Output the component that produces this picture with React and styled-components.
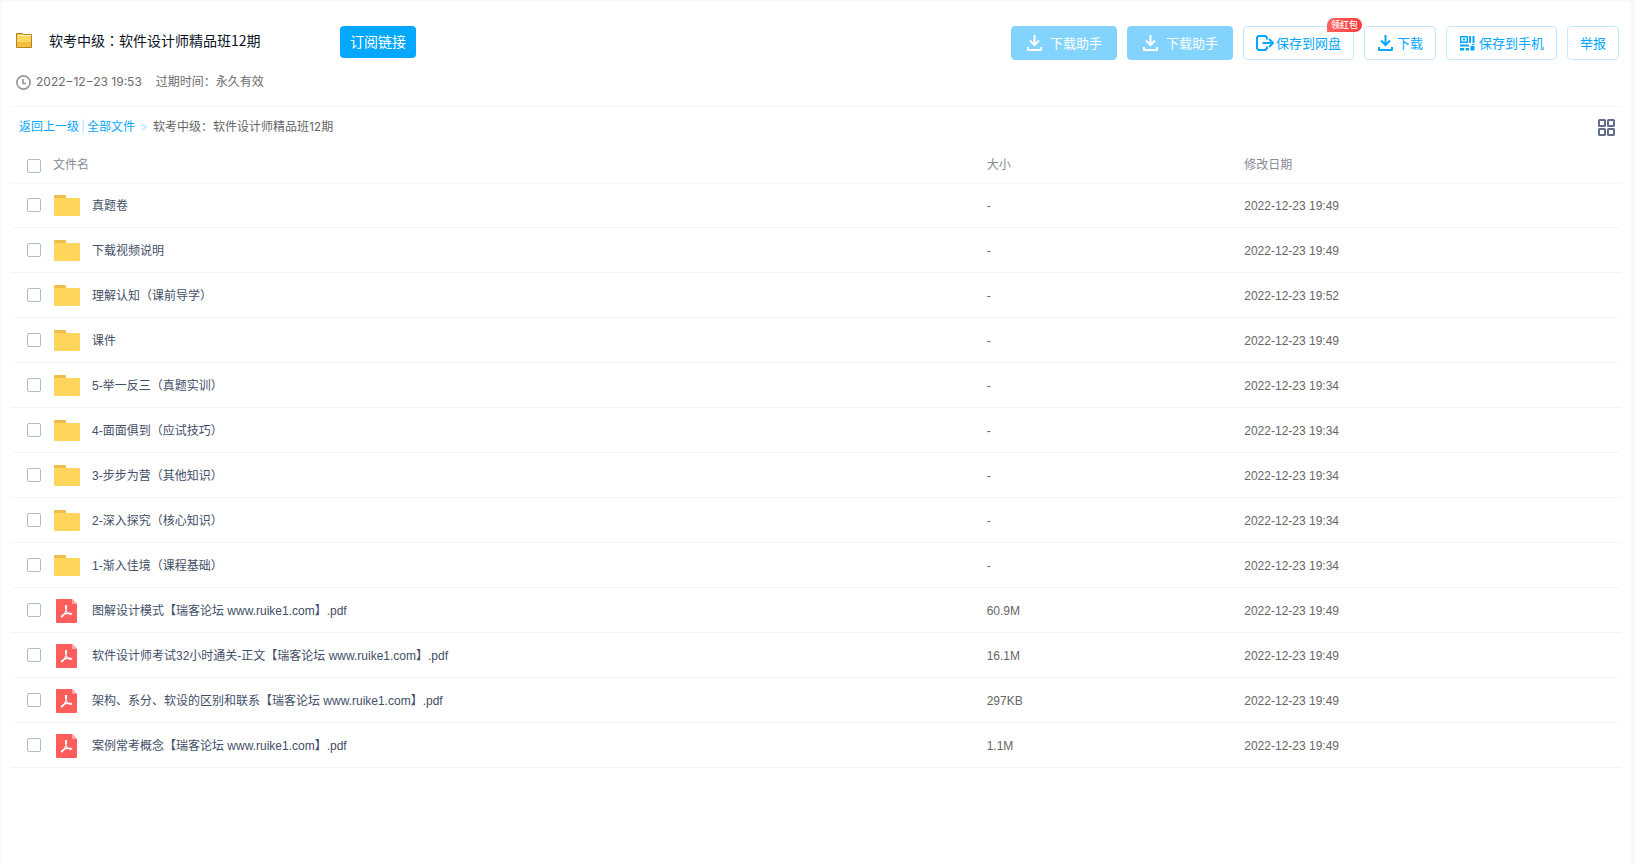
import React from "react";
import styled, { createGlobalStyle, css } from "styled-components";

const GlobalStyle = createGlobalStyle`
  * {
    box-sizing: border-box;
  }

  body {
    margin: 0;
    background-color: #f7f7f7;
    font-family: "Liberation Sans", "Noto Sans CJK SC", sans-serif;
    font-size: 12px;
    color: #424e67;
  }

  button, input {
    font-family: inherit;
  }
`;

const Page = styled.div`
  min-height: 100vh;
  padding: 1px 4px 0 1px;
  display: flex;
`;

const Card = styled.main`
  flex: 1;
  padding: 0 10px 24px;
  background-color: #fff;
  border-radius: 4px 4px 0 0;
`;

const Header = styled.header`
  height: 106px;
  padding: 25px 2px 0 5px;
  display: flex;
  justify-content: space-between;
  align-items: flex-start;
  border-bottom: 1px solid #f5f6f7;
`;

const TitleRow = styled.div`
  height: 32px;
  display: flex;
  align-items: flex-start;

  svg {
    margin-top: 6px;
  }
`;

const Title = styled.h1`
  width: 291px;
  margin: 0 0 0 17px;
  padding-right: 16px;
  font-family: "Noto Sans CJK TC", sans-serif;
  font-size: 14px;
  font-weight: 400;
  line-height: 28px;
  color: #09121f;
`;

const SubscribeButton = styled.button`
  height: 32px;
  padding: 0 10px 2px;
  border: none;
  border-radius: 4px;
  background-color: #06a7ff;
  color: #fff;
  font-size: 14px;
  cursor: pointer;
`;

const Meta = styled.div`
  height: 20px;
  margin-top: 14px;
  display: flex;
  align-items: center;
  font-family: Inter, "Noto Sans CJK SC", sans-serif;
  line-height: 20px;
  color: #6c6c6c;

  svg {
    margin-right: 5px;
  }
`;

const Expire = styled.span`
  margin-left: 14px;
`;

const Actions = styled.div`
  display: flex;
  gap: 10px;
`;

const ActionButton = styled.button`
  position: relative;
  height: 34px;
  padding: 0 12px;
  display: flex;
  align-items: center;
  gap: ${(props) => props.$gap || 4}px;
  border: 1px solid #c3eaff;
  border-radius: 4px;
  background-color: #fff;
  color: #06a7ff;
  font-size: 13px;
  white-space: nowrap;
  cursor: pointer;

  ${(props) =>
    props.$filled &&
    css`
      padding: 0 14px;
      border-color: #83d3ff;
      background-color: #83d3ff;
      color: #fff;
    `}
`;

const ButtonLabel = styled.span`
  padding-bottom: 2px;
`;

const Badge = styled.span`
  position: absolute;
  top: -9px;
  right: -9px;
  height: 14px;
  padding: 0 4px;
  border-radius: 7px 7px 7px 0;
  background: linear-gradient(90deg, #ff6262, #ff3b3b);
  color: #fff;
  font-size: 9px;
  font-weight: 500;
  line-height: 14px;
`;

const Toolbar = styled.div`
  height: 40px;
  padding: 0 6px 0 8px;
  display: flex;
  justify-content: space-between;
  align-items: center;
`;

const Breadcrumb = styled.nav`
  display: flex;
  font-family: Inter, "Noto Sans CJK SC", sans-serif;
  line-height: 20px;
  color: #666;
`;

const Crumb = styled.a`
  color: #06a7ff;
  text-decoration: none;
`;

const Separator = styled.span`
  margin: 0 ${(props) => props.$space}px;
  color: #b4e4ff;
`;

const ViewButton = styled.button`
  padding: 0;
  display: flex;
  border: none;
  background: none;
  cursor: pointer;
`;

const Table = styled.table`
  width: 100%;
  table-layout: fixed;
  border-collapse: collapse;
`;

const Th = styled.th`
  height: 36px;
  padding: ${(props) => (props.$check ? "2px 0 0" : 0)};
  width: ${(props) => props.$width};
  border-bottom: 1px solid #f3f5f7;
  font-weight: 400;
  text-align: left;
  line-height: 18px;
  color: #888b93;
`;

const Row = styled.tr`
  height: 45px;

  &:first-child {
    height: 44px;
  }
`;

const Td = styled.td`
  padding: ${(props) => (props.$muted ? "2px 0 0" : 0)};
  border-bottom: 1px solid #f1f5fa;
  line-height: 18px;
  color: ${(props) => (props.$muted ? "#666" : "#424e67")};
`;

const Checkbox = styled.input`
  appearance: none;
  display: block;
  width: 14px;
  height: 14px;
  margin: 0 0 0 16px;
  border: 1px solid #afbccb;
  border-radius: 2px;
  background-color: #fff;

  &:checked {
    border-color: #06a7ff;
    background-color: #06a7ff;
  }
`;

const FileName = styled.label`
  padding-left: 1px;
  display: flex;
  align-items: center;
  gap: 12px;

  span {
    padding-top: 2px;
  }
`;

const SmallFolderIcon = () => (
  <svg width="16" height="16" viewBox="0 0 16 16">
    <path d="M0.5 1.5h6l1 1h8v13h-15z" fill="#f1c040" stroke="#b9821f" />
    <path d="M2 3.5h13" stroke="#fff3c4" />
    <path d="M1 4h14v6h-14z" fill="#fbd75f" />
    <path d="M1 11.500h14" stroke="#e9b23a" strokeDasharray="1 1" />
  </svg>
);

const ClockIcon = () => (
  <svg width="15" height="15" viewBox="0 0 15 15" fill="none">
    <circle cx="7.5" cy="7.5" r="6.600" stroke="#999" strokeWidth="1.700" />
    <path d="M7 4v4.500h3" stroke="#999" strokeWidth="1.700" />
  </svg>
);

const DownloadIcon = () => (
  <svg width="16" height="16" viewBox="0 0 16 16" fill="none" stroke="currentColor" strokeWidth="2">
    <path d="M8.500 0v10M4 5.500l4.500 4.500l4.500-4.500" />
    <path d="M2 12v3h13v-3" strokeLinejoin="round" />
  </svg>
);

const SaveIcon = () => (
  <svg width="18" height="16" viewBox="0 0 18 16" fill="none" stroke="currentColor" strokeWidth="2">
    <path d="M11 4.500V2.500L9.500 1H2.500L1 2.500v11L2.500 15h7l1.500-1.500V11.500" />
    <path d="M6.500 8h10M13 4l4 4-4 4" />
  </svg>
);

const QrIcon = () => (
  <svg width="16" height="16" viewBox="0 0 16 16" fill="currentColor">
    <path d="M1 1h8v7h-8zM2.500 2.500v4h5v-4z" fillRule="evenodd" />
    <path d="M4 3.500h2v2h-2zM10 1h2v7h-2zM13.500 1h2v7h-2zM1 9.500h9v2h-9zM1 13h4v2.500h-4zM6.500 13h3.500v2.500h-3.500zM11.500 11h4v4.500h-4zM13 9h2.500v1h-2.500z" />
  </svg>
);

const GridIcon = () => (
  <svg width="17" height="17" viewBox="0 0 17 17" fill="none" stroke="#636d8a" strokeWidth="2">
    <rect x="1" y="1" width="6" height="6" rx="0.5" />
    <rect x="10" y="1" width="6" height="6" rx="0.5" />
    <rect x="1" y="10" width="6" height="6" rx="0.5" />
    <rect x="10" y="10" width="6" height="6" rx="0.5" />
  </svg>
);

const FolderIcon = () => (
  <svg width="26" height="26" viewBox="0 0 26 26">
    <path d="M0 4a1 1 0 0 1 1-1h10a1 1 0 0 1 1 1v4H0z" fill="#eebe4a" />
    <path d="M0 6h25a1 1 0 0 1 1 1v16a1 1 0 0 1-1 1H1a1 1 0 0 1-1-1z" fill="#ffd55c" />
  </svg>
);

const PdfIcon = () => (
  <svg width="26" height="26" viewBox="0 0 26 26">
    <path d="M3 2H18l5 5v18a1 1 0 0 1-1 1H3a1 1 0 0 1-1-1V3a1 1 0 0 1 1-1z" fill="#ff5c5c" />
    <path d="M18 2l5 5h-4a1 1 0 0 1-1-1z" fill="#ffa8a5" />
    <path
      d="M11.500 8.500h1c0.500 2-0.200 4.500-1.200 6.500s-2 4.500-3.500 5c-1.500-0.800 1.500-2.800 4.500-3.400s5.200-0.400 5.500 0.500c-1.200 1-4.200-0.800-5.200-2.600s-1.300-4-1.100-6z"
      fill="none"
      stroke="#fff"
      strokeWidth="1.200"
      strokeLinejoin="round"
    />
  </svg>
);

const files = [
  { name: "真题卷", size: "-", date: "2022-12-23 19:49" },
  { name: "下载视频说明", size: "-", date: "2022-12-23 19:49" },
  { name: "理解认知（课前导学）", size: "-", date: "2022-12-23 19:52" },
  { name: "课件", size: "-", date: "2022-12-23 19:49" },
  { name: "5-举一反三（真题实训）", size: "-", date: "2022-12-23 19:34" },
  { name: "4-面面俱到（应试技巧）", size: "-", date: "2022-12-23 19:34" },
  { name: "3-步步为营（其他知识）", size: "-", date: "2022-12-23 19:34" },
  { name: "2-深入探究（核心知识）", size: "-", date: "2022-12-23 19:34" },
  { name: "1-渐入佳境（课程基础）", size: "-", date: "2022-12-23 19:34" },
  { name: "图解设计模式【瑞客论坛 www.ruike1.com】.pdf", size: "60.9M", date: "2022-12-23 19:49", pdf: true },
  { name: "软件设计师考试32小时通关-正文【瑞客论坛 www.ruike1.com】.pdf", size: "16.1M", date: "2022-12-23 19:49", pdf: true },
  { name: "架构、系分、软设的区别和联系【瑞客论坛 www.ruike1.com】.pdf", size: "297KB", date: "2022-12-23 19:49", pdf: true },
  { name: "案例常考概念【瑞客论坛 www.ruike1.com】.pdf", size: "1.1M", date: "2022-12-23 19:49", pdf: true },
];

const App = () => {
  return (
    <>
      <GlobalStyle />
      <Page>
        <Card>
          <Header>
            <div>
              <TitleRow>
                <SmallFolderIcon />
                <Title>软考中级：软件设计师精品班12期</Title>
                <SubscribeButton>订阅链接</SubscribeButton>
              </TitleRow>
              <Meta>
                <ClockIcon />
                <span>2022−12−23 19:53</span>
                <Expire>过期时间：永久有效</Expire>
              </Meta>
            </div>
            <Actions>
              <ActionButton $filled $gap={8}>
                <DownloadIcon />
                <ButtonLabel>下载助手</ButtonLabel>
              </ActionButton>
              <ActionButton $filled $gap={8}>
                <DownloadIcon />
                <ButtonLabel>下载助手</ButtonLabel>
              </ActionButton>
              <ActionButton $gap={2}>
                <SaveIcon />
                <ButtonLabel>保存到网盘</ButtonLabel>
                <Badge>领红包</Badge>
              </ActionButton>
              <ActionButton>
                <DownloadIcon />
                <ButtonLabel>下载</ButtonLabel>
              </ActionButton>
              <ActionButton>
                <QrIcon />
                <ButtonLabel>保存到手机</ButtonLabel>
              </ActionButton>
              <ActionButton>
                <ButtonLabel>举报</ButtonLabel>
              </ActionButton>
            </Actions>
          </Header>
          <Toolbar>
            <Breadcrumb>
              <Crumb href="#">返回上一级</Crumb>
              <Separator $space={2}>|</Separator>
              <Crumb href="#">全部文件</Crumb>
              <Separator $space={5}>&gt;</Separator>
              <span>软考中级：软件设计师精品班12期</span>
            </Breadcrumb>
            <ViewButton aria-label="grid">
              <GridIcon />
            </ViewButton>
          </Toolbar>
          <Table>
            <thead>
              <tr>
                <Th $check $width="42px">
                  <Checkbox type="checkbox" aria-label="all" />
                </Th>
                <Th>文件名</Th>
                <Th $width="16%">大小</Th>
                <Th $width="23.4%">修改日期</Th>
              </tr>
            </thead>
            <tbody>
              {files.map((file, index) => {
                return (
                  <Row key={file.name}>
                    <Td>
                      <Checkbox type="checkbox" id={`file-${index}`} />
                    </Td>
                    <Td>
                      <FileName htmlFor={`file-${index}`}>
                        {file.pdf ? <PdfIcon /> : <FolderIcon />}
                        <span>{file.name}</span>
                      </FileName>
                    </Td>
                    <Td $muted>{file.size}</Td>
                    <Td $muted>{file.date}</Td>
                  </Row>
                );
              })}
            </tbody>
          </Table>
        </Card>
      </Page>
    </>
  );
};

export default App;
